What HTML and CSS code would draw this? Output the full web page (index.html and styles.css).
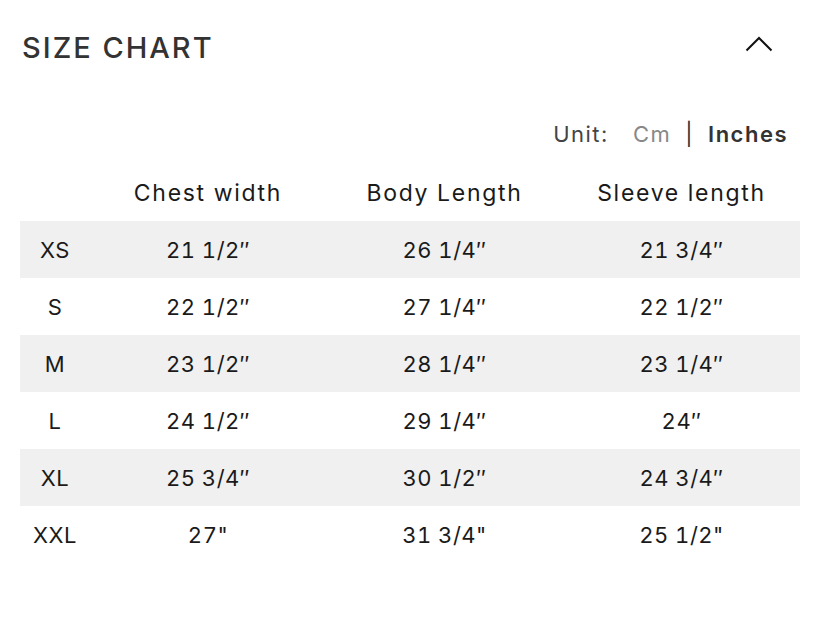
FILE: index.html
```html
<!DOCTYPE html>
<html>
<head>
<meta charset="utf-8">
<link rel="stylesheet" href="styles.css">
</head>
<body>
<div class="panel">
  <div class="header">
    <h2 class="title">SIZE CHART</h2>
    <svg class="chevron" width="28" height="16" viewBox="0 0 28 16"><path d="M1.5 14.5 L14 2 L26.5 14.5" fill="none" stroke="#111" stroke-width="2"/></svg>
  </div>
  <div class="units">
    <span class="unit-label">Unit:</span>
    <span class="unit-cm">Cm</span>
    <span class="unit-sep">|</span>
    <span class="unit-in">Inches</span>
  </div>
  <div class="table">
    <div class="row head"><div class="cell lbl"></div><div class="cell">Chest width</div><div class="cell">Body Length</div><div class="cell">Sleeve length</div></div>
    <div class="row shade"><div class="cell lbl">XS</div><div class="cell">21 1/2″</div><div class="cell">26 1/4″</div><div class="cell">21 3/4″</div></div>
    <div class="row"><div class="cell lbl">S</div><div class="cell">22 1/2″</div><div class="cell">27 1/4″</div><div class="cell">22 1/2″</div></div>
    <div class="row shade"><div class="cell lbl">M</div><div class="cell">23 1/2″</div><div class="cell">28 1/4″</div><div class="cell">23 1/4″</div></div>
    <div class="row"><div class="cell lbl">L</div><div class="cell">24 1/2″</div><div class="cell">29 1/4″</div><div class="cell">24″</div></div>
    <div class="row shade"><div class="cell lbl">XL</div><div class="cell">25 3/4″</div><div class="cell">30 1/2″</div><div class="cell">24 3/4″</div></div>
    <div class="row"><div class="cell lbl">XXL</div><div class="cell">27"</div><div class="cell">31 3/4"</div><div class="cell">25 1/2"</div></div>
  </div>
</div>
</body>
</html>
```
FILE: styles.css
```css
html, body { margin: 0; padding: 0; background: #fff; }
body { font-family: Inter, "Liberation Sans", sans-serif; color: #1a1a1a; }
.panel { width: 780px; padding: 0 26px 0 20px; }
.header { display: flex; justify-content: space-between; align-items: flex-start; height: 110px; }
.title { margin: 30px 0 0 2px; font-size: 29px; font-weight: 500; color: #333; letter-spacing: 2px; line-height: 36px; }
.chevron { margin: 36px 27px 0 0; }
.units { display: flex; justify-content: flex-end; align-items: center; font-size: 22px; letter-spacing: 1.5px; height: 48px; padding-right: 12px; }
.unit-label { color: #444; margin-right: 24px; }
.unit-cm { color: #888; margin-right: 14px; }
.unit-sep { color: #333; margin-right: 14px; }
.unit-in { color: #333; font-weight: 600; }
.table { margin-top: 11px; }
.row { display: grid; grid-template-columns: 70px 236px 237px 237px; height: 57px; align-items: center; font-size: 22px; letter-spacing: 0.5px; font-variant-numeric: tabular-nums; }
.row.head { height: 52px; padding-bottom: 4px; box-sizing: border-box; font-size: 23px; letter-spacing: 1.7px; }
.row.shade { background: #f0f0f0; }
.cell { text-align: center; }
```
